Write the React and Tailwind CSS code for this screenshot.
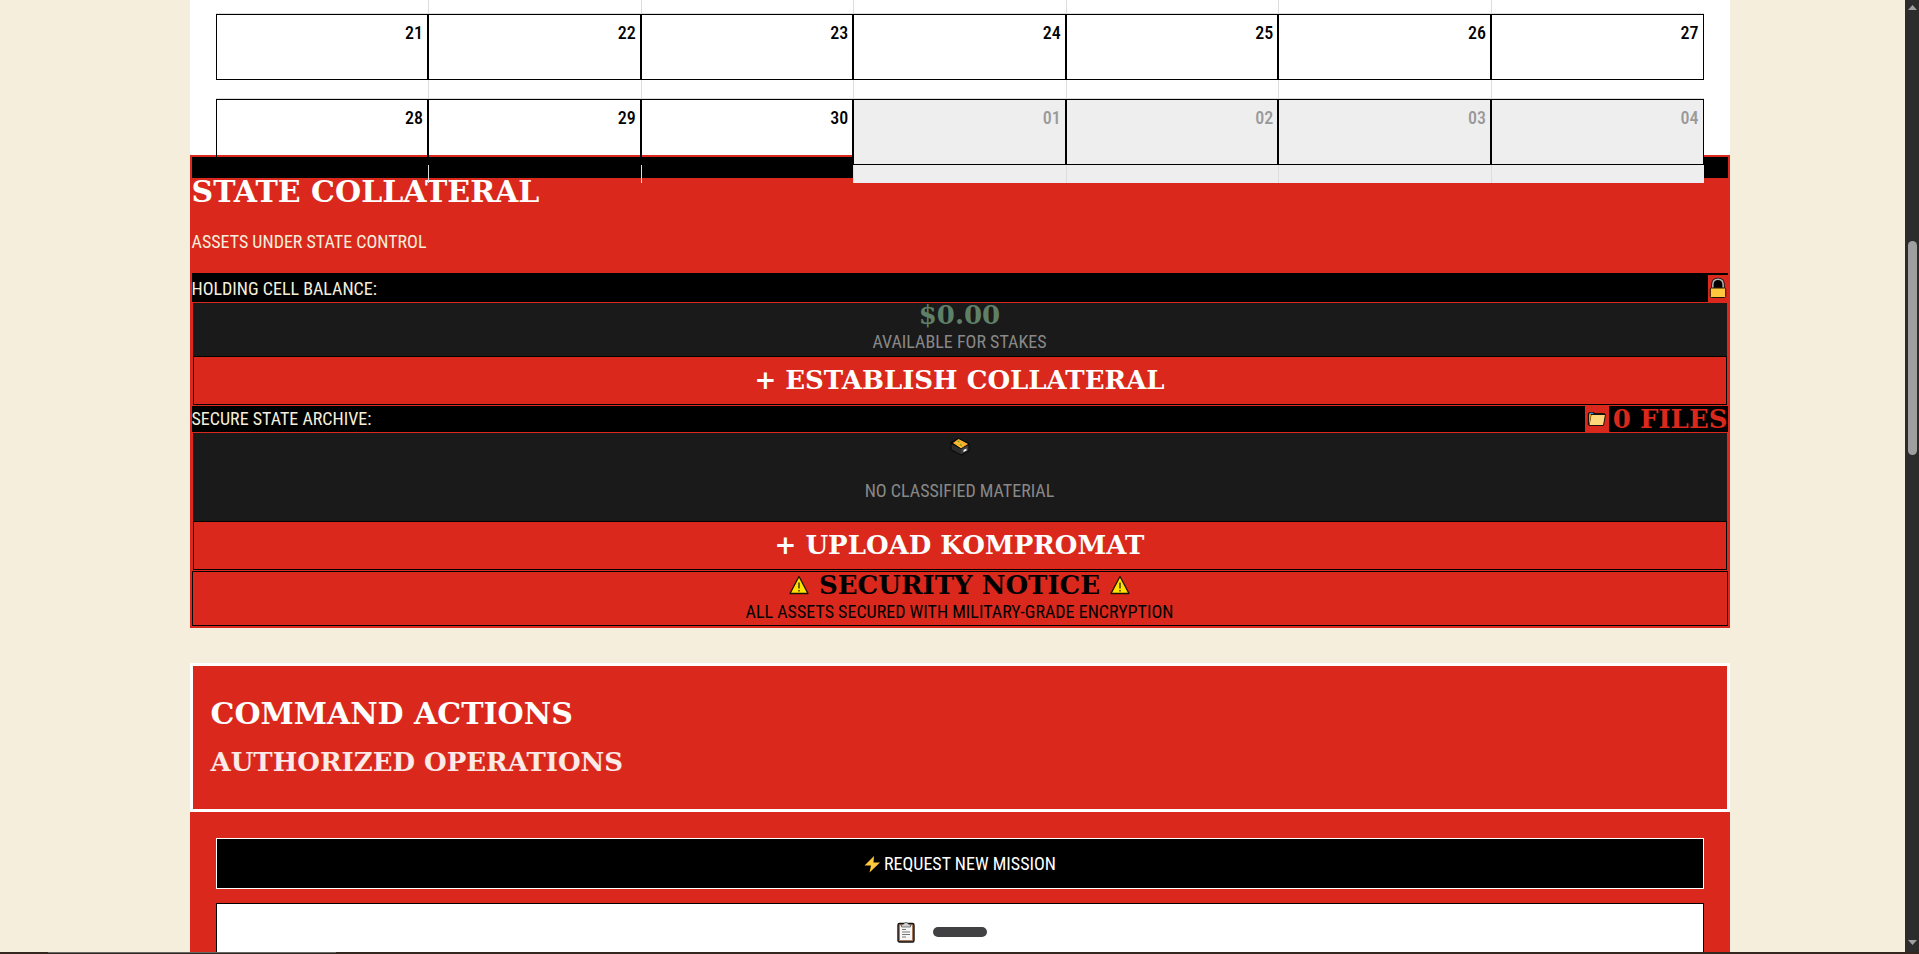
const BODY = "font-['Roboto_Condensed','Liberation_Sans_Narrow',Roboto,sans-serif]";
const DISPLAY = "font-['DejaVu_Serif','DejaVu_Sans',serif] font-bold";

const WEEKS = [
  [["21"], ["22"], ["23"], ["24"], ["25"], ["26"], ["27"]],
  [["28"], ["29"], ["30"], ["01", true], ["02", true], ["03", true], ["04", true]],
];

function Lock() {
  return (
    <svg viewBox="0 0 20 27" className="h-[27px] w-5" aria-hidden="true">
      <path d="M4.500 13V10C4.500 6 6.800 4 10 4S15.500 6 15.500 10V13Z" fill="#000" stroke="#111" strokeWidth="2.500" />
      <path d="M4.800 13V10C4.800 6.500 7 4.300 10 4.300S15.200 6.500 15.200 10V13" fill="none" stroke="#b4b4b4" strokeWidth="1.500" />
      <rect x="2.300" y="13" width="15.400" height="9.500" rx="1" fill="#ffc83d" stroke="#201400" strokeWidth="1" />
    </svg>
  );
}

function Folder() {
  return (
    <svg viewBox="0 0 24 26" className="h-[26px] w-6" aria-hidden="true">
      <path d="M3.500 19V8L4.500 6.800h4l1 1H19v3" fill="#e8a33d" stroke="#1a1208" strokeWidth="1.500" />
      <path d="M4.500 7.500h3.500" stroke="#3a96dd" strokeWidth="1.500" />
      <path d="M6 8.500h14.500L18.500 19.500H4Z" fill="#ffd679" stroke="#1a1208" strokeWidth="1" strokeLinejoin="round" />
      <path d="M4 19V9l2-.5L5 15Z" fill="#f2a100" />
    </svg>
  );
}

function CardBox() {
  return (
    <svg viewBox="0 0 20 20" className="h-5 w-5" aria-hidden="true">
      <path d="M8 1 19.500 6.500V14L11.500 18.500.5 13V5.500Z" fill="#050505" />
      <path d="M1.500 7 11 12v5.500L1.500 12.500Z" fill="#2d2d2d" />
      <path d="M11 12 18.500 8v5.500L11 17.500Z" fill="#3d3d3d" />
      <path d="M3 6 8.500 2 18 7l-7 4.200Z" fill="#ffc83d" />
      <path d="m4 5.500 9.500 4.500M6 4l9.500 4.800M8 3l9 4.800" stroke="#e8930c" strokeWidth=".8" />
      <path d="m7.500 4 2 1M10 7.500l2 1" stroke="#46a046" strokeWidth="1" />
      <path d="m13.500 13 3-1.600v2L13.500 15Z" fill="#fff" />
    </svg>
  );
}

function Warning() {
  return (
    <svg viewBox="0 0 20 20" className="h-5 w-5" aria-hidden="true">
      <path d="M10 1.500 19 18.500H1Z" fill="#ffe000" stroke="#1a1200" strokeWidth="1.300" strokeLinejoin="round" />
      <path d="M10 7.500v6M10 15v1.600" stroke="#4a4200" strokeWidth="1.600" />
    </svg>
  );
}

function Bolt() {
  return (
    <svg viewBox="0 0 20 20" className="h-5 w-5" aria-hidden="true">
      <path d="M11 2 1.500 11.500H8L6.500 18.500 17 8.500H10.500Z" fill="#ffc83d" />
    </svg>
  );
}

function Clipboard() {
  return (
    <svg viewBox="0 0 18 22" className="h-[22px] w-[18px]" aria-hidden="true">
      <rect x="1" y="2.500" width="16" height="18.500" rx="1.500" fill="#a8785a" stroke="#111" strokeWidth="1.400" />
      <rect x="3" y="4.500" width="12" height="14.500" fill="#f6f6f6" />
      <path d="M4.500 5c0-1.500 1-2 2.500-2 .2-2 3.800-2 4 0 1.500 0 2.500.5 2.500 2v1h-9Z" fill="#d0d0d0" stroke="#333" strokeWidth=".6" />
      <path d="M5 8.500h4M5 11h8M5 13.500h8M5 16h4" stroke="#777" strokeWidth="1" />
    </svg>
  );
}

function Calendar() {
  return (
    <section className="relative z-10 h-[155px] bg-white px-[26px]" aria-label="Calendar">
      <table className="w-full table-fixed border-separate border-spacing-0">
        <tbody>
          <tr className="h-[13px]">
            {WEEKS[0].map(([day]) => (
              <td key={day} className="border-l border-[#ddd] p-0 first:border-l-0" />
            ))}
          </tr>
          {WEEKS.map((week, i) => (
            <tr key={i}>
              {week.map(([day, muted]) => (
                <td
                  key={day}
                  className={
                    "h-[85px] p-0 align-top " + (muted ? "bg-[#eee] text-[#999]" : "text-black")
                  }
                >
                  <div className="h-px bg-[#ddd]" />
                  <div className="h-[66px] border border-black px-1 text-right text-lg font-medium leading-9">
                    {day}
                  </div>
                  <div className={"h-[18px] " + (day === "21" || day === "28" ? "" : "border-l border-[#ddd]")} />
                </td>
              ))}
            </tr>
          ))}
        </tbody>
      </table>
    </section>
  );
}

function BigButton({ children }) {
  return (
    <button
      type="button"
      className={"block h-[49px] w-full border border-black bg-[#da291c] text-[26px] leading-[43px] text-white " + DISPLAY}
    >
      {children}
    </button>
  );
}

function Collateral() {
  return (
    <section className="border-2 border-[#da291c] bg-[#da291c]">
      <div className="h-[21px] bg-black" />
      <header className="h-[95px] text-[#f5eedc]">
        <h2 className={"h-[54px] text-[30px] leading-7 text-white " + DISPLAY}>STATE COLLATERAL</h2>
        <p className="text-lg leading-5">ASSETS UNDER STATE CONTROL</p>
      </header>

      <div className="flex h-[29px] items-center justify-between border-t-2 border-black bg-black text-lg leading-6 text-[#f5eedc]">
        <span>HOLDING CELL BALANCE:</span>
        <span className="bg-[#da291c]"><Lock /></span>
      </div>
      <div className="border border-[#da291c] bg-[#1a1a1a] text-center">
        <div className="h-[53px]">
          <div className={"text-[26px] leading-6 text-[#5f8068] " + DISPLAY}>$0.00</div>
          <div className="text-lg leading-[30px] text-[#888]">AVAILABLE FOR STAKES</div>
        </div>
        <BigButton>+ ESTABLISH COLLATERAL</BigButton>
      </div>

      <div className="flex h-[26px] items-center justify-between bg-black text-lg text-[#f5eedc]">
        <span>SECURE STATE ARCHIVE:</span>
        <span className="flex items-center">
          <span className="bg-[#da291c]"><Folder /></span>
          <span className={"pl-1 text-[26px] leading-6 text-[#da291c] " + DISPLAY}>0 FILES</span>
        </span>
      </div>
      <div className="border border-[#da291c] bg-[#1a1a1a] text-center">
        <div className="flex h-[88px] flex-col items-center justify-between pb-[18px] pt-1">
          <CardBox />
          <p className="text-lg leading-6 text-[#888]">NO CLASSIFIED MATERIAL</p>
        </div>
        <BigButton>+ UPLOAD KOMPROMAT</BigButton>
      </div>

      <div className="h-[55px] border border-black text-center text-black">
        <div className="flex h-[25px] items-center justify-center gap-[10px]">
          <Warning />
          <span className={"text-[26px] leading-6 " + DISPLAY}>SECURITY NOTICE</span>
          <Warning />
        </div>
        <p className="text-lg leading-[30px]">ALL ASSETS SECURED WITH MILITARY-GRADE ENCRYPTION</p>
      </div>
    </section>
  );
}

function CommandActions() {
  return (
    <section className="mt-[35px] bg-[#da291c]">
      <header className="h-[149px] border-[3px] border-white px-[18px] pt-8">
        <h2 className={"text-[30px] leading-8 text-white " + DISPLAY}>COMMAND ACTIONS</h2>
        <p className={"mt-4 text-[26px] leading-8 text-white/90 " + DISPLAY}>AUTHORIZED OPERATIONS</p>
      </header>
      <div className="flex flex-col gap-[14px] p-[26px]">
        <button type="button" className="flex h-[51px] items-center justify-center gap-px border border-white bg-black text-lg text-white">
          <Bolt />
          REQUEST NEW MISSION
        </button>
        <button type="button" aria-label="Reports" className="flex h-[58px] items-center justify-center gap-[18px] border border-black bg-white pr-9">
          <Clipboard />
          <span className="h-[10px] w-[54px] rounded-full bg-[#414144]" />
        </button>
      </div>
    </section>
  );
}

function ScrollTrack() {
  return (
    <div className="absolute inset-y-0 right-0 z-20 w-[14px] bg-[#2c2c2c]" aria-hidden="true">
      <svg viewBox="0 0 14 14" className="absolute left-0 top-0 h-[14px] w-[14px]">
        <path d="M3 10 7.500 5 12 10Z" fill="#9f9f9f" />
      </svg>
      <div className="absolute left-[3px] top-[241px] h-[214px] w-[9px] rounded-full bg-[#9f9f9f]" />
      <svg viewBox="0 0 14 14" className="absolute bottom-[2px] left-0 h-[14px] w-[14px]">
        <path d="M3 4 7.500 9 12 4Z" fill="#9f9f9f" />
      </svg>
    </div>
  );
}

export default function App() {
  return (
    <div className={"flex h-screen flex-col bg-[#f5eedc] " + BODY}>
      <div className="relative min-h-0 flex-1 overflow-hidden">
        <main className="mx-auto max-w-[1540px]">
          <Calendar />
          <Collateral />
          <CommandActions />
        </main>
        <ScrollTrack />
      </div>
      <footer className="flex h-[2px] bg-[#33271f]">
        <div className="ml-12 h-px w-72 bg-[#666]" />
      </footer>
    </div>
  );
}
